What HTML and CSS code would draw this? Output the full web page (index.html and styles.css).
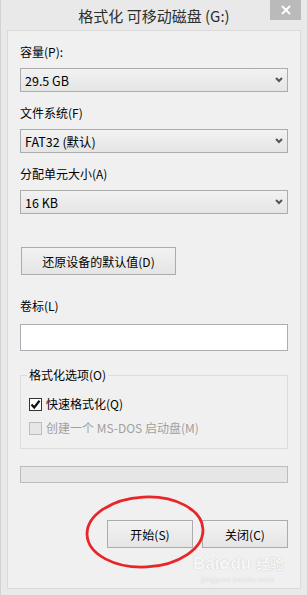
FILE: index.html
```html
<!DOCTYPE html>
<html>
<head>
    <meta charset="UTF-8">
    <title>格式化 可移动磁盘 (G:)</title>
    <link rel="stylesheet" href="styles.css">
</head>
<body>

    <div class="window">
        <div class="titlebar">
            <div class="title">格式化 可移动磁盘 (G:)</div>
            <div class="close-btn">
                <svg width="10" height="10" viewBox="0 0 10 10">
                    <path d="M1 1 L9 9 M9 1 L1 9" stroke="#fff" stroke-width="2" fill="none"/>
                </svg>
            </div>
        </div>

        <div class="panel">
            <div class="label first">容量(P):</div>
            <div class="combo">
                <span>29.5 GB</span>
                <svg class="arrow" width="8" height="6" viewBox="0 0 8 6"><path d="M1 1 L4 4 L7 1" stroke="#555" stroke-width="2" fill="none"/></svg>
            </div>

            <div class="label">文件系统(F)</div>
            <div class="combo">
                <span>FAT32 (默认)</span>
                <svg class="arrow" width="8" height="6" viewBox="0 0 8 6"><path d="M1 1 L4 4 L7 1" stroke="#555" stroke-width="2" fill="none"/></svg>
            </div>

            <div class="label">分配单元大小(A)</div>
            <div class="combo">
                <span>16 KB</span>
                <svg class="arrow" width="8" height="6" viewBox="0 0 8 6"><path d="M1 1 L4 4 L7 1" stroke="#555" stroke-width="2" fill="none"/></svg>
            </div>

            <div class="btn reset">还原设备的默认值(D)</div>

            <div class="label volume">卷标(L)</div>
            <div class="textbox"></div>

            <fieldset class="options">
                <legend>格式化选项(O)</legend>
                <div class="check-row">
                    <div class="checkbox">
                        <svg width="11" height="11" viewBox="0 0 11 11"><path d="M1.5 5.5 L4.2 8.5 L9.5 1.8" stroke="#111" stroke-width="2.2" fill="none"/></svg>
                    </div>
                    快速格式化(Q)
                </div>
                <div class="check-row disabled">
                    <div class="checkbox"></div>
                    创建一个 MS-DOS 启动盘(M)
                </div>
            </fieldset>

            <div class="progress"></div>

            <div class="buttons">
                <div class="btn">开始(S)</div>
                <div class="btn">关闭(C)</div>
            </div>

            <!-- red marker circled around the start button -->
            <svg class="marker" width="130" height="82" viewBox="0 0 130 82">
                <ellipse cx="65" cy="41" rx="58" ry="35" transform="rotate(-3 65 41)" stroke="#e8262a" stroke-width="2.8" fill="none"/>
            </svg>

            <div class="watermark">
                <div class="wm-logo">Bai<span class="paw">&#10047;</span>du <span class="wm-cn">经验</span></div>
                <div class="wm-url">jingyan.baidu.com</div>
            </div>
        </div>
    </div>

</body>
</html>
```

FILE: styles.css
```css
body {
    margin: 0;
    font-family: "Noto Sans CJK SC", "Liberation Sans", sans-serif;
    font-size: 12px;
    color: #000;
    background: #e9e9e9;
}

.window {
    width: 308px;
    height: 596px;
    box-sizing: border-box;
    border: 1px solid #d2d2d2;
    border-top: none;
    background: #e9e9e9;
    display: flex;
    flex-direction: column;
}

.titlebar {
    height: 30px;
    display: grid;
    grid-template-columns: 1fr auto 1fr;
}

.title {
    grid-column: 2;
    font-size: 15px;
    line-height: 20px;
    padding-top: 6px;
    color: #2e2e2e;
}

.close-btn {
    grid-column: 3;
    justify-self: end;
    width: 31px;
    height: 20px;
    margin-right: 6px;
    background: #bababa;
    display: flex;
    justify-content: center;
    align-items: center;
}

.panel {
    position: relative;
    margin: 0 6px 0 6px;
    height: 559px;
    box-sizing: border-box;
    border: 1px solid #dadada;
    background: #f0f0f0;
    padding: 0 12px;
}

.label {
    line-height: 16px;
    margin-top: 13px;
    margin-bottom: 8px;
}

    .label.first {
        margin-top: 13px;
    }

    .label.volume {
        margin-top: 23px;
        margin-bottom: 10px;
    }

.combo {
    height: 24px;
    box-sizing: border-box;
    border: 1px solid #acacac;
    background: linear-gradient(#f2f2f2, #e5e5e5);
    display: flex;
    align-items: center;
    justify-content: space-between;
    padding: 0 4px 0 4px;
    font-size: 12.5px;
}

.btn {
    height: 28px;
    box-sizing: border-box;
    border: 1px solid #acacac;
    background: linear-gradient(#f2f2f2, #e5e5e5);
    display: flex;
    align-items: center;
    justify-content: center;
}

    .btn.reset {
        width: 155px;
        margin: 33px 0 0 1px;
    }

.textbox {
    height: 27px;
    box-sizing: border-box;
    border: 1px solid #abadb3;
    background: #fff;
}

.options {
    margin: 16px 0 0 0;
    padding: 13px 8px 12px 8px;
    border: 1px solid #dcdcdc;
    min-width: 0;
}

    .options legend {
        padding: 0 2px;
        margin-left: -2px;
        line-height: 16px;
    }

.check-row {
    display: flex;
    align-items: center;
    gap: 4px;
    line-height: 16px;
}

    .check-row + .check-row {
        margin-top: 8px;
    }

    .check-row.disabled {
        color: #a0a0a0;
    }

.checkbox {
    width: 13px;
    height: 13px;
    box-sizing: border-box;
    border: 1px solid #333;
    background: #fff;
    display: flex;
    align-items: center;
    justify-content: center;
}

    .check-row.disabled .checkbox {
        border-color: #bcbcbc;
        background: #e6e6e6;
    }

.progress {
    margin-top: 17px;
    height: 17px;
    box-sizing: border-box;
    border: 1px solid #bcbcbc;
    background: #e6e6e6;
}

.buttons {
    display: flex;
    justify-content: flex-end;
    gap: 9px;
    margin-top: 37px;
}

    .buttons .btn {
        width: 86px;
    }

.marker {
    position: absolute;
    left: 72px;
    top: 460px;
}

.watermark {
    position: absolute;
    left: 185px;
    top: 522px;
    width: 90px;
    color: #f8f8f8;
    text-shadow: 0 0 1px #b8b8b8;
    text-align: center;
}

.wm-logo {
    font-family: "Liberation Sans", sans-serif;
    font-weight: bold;
    font-size: 17px;
    line-height: 20px;
    white-space: nowrap;
}

.paw {
    font-size: 13px;
}

.wm-cn {
    font-family: "Noto Sans CJK SC", sans-serif;
    font-size: 14px;
}

.wm-url {
    font-family: "Liberation Sans", sans-serif;
    font-size: 8px;
    line-height: 10px;
    letter-spacing: 0.5px;
}
```
